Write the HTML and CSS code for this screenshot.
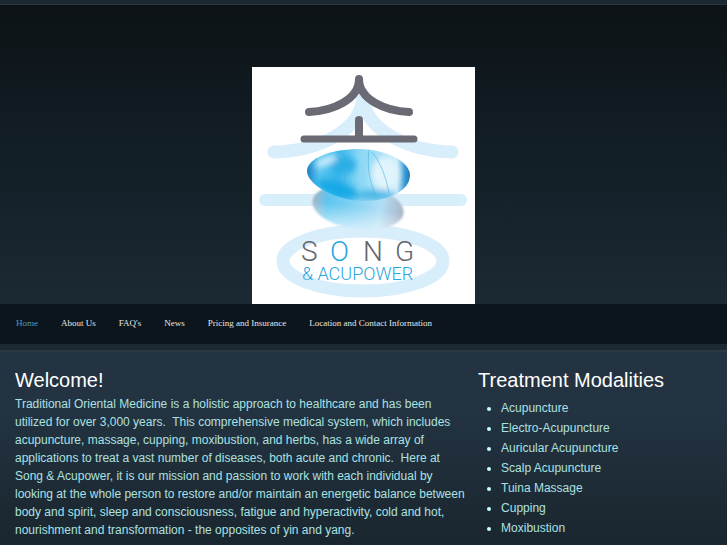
FILE: index.html
```html
<!DOCTYPE html>
<html lang="en">
<head>
    <meta charset="UTF-8">
    <meta name="viewport" content="width=device-width, initial-scale=1.0">
    <title>Song &amp; Acupower</title>
    <link rel="stylesheet" href="styles.css">
</head>
<body>
    <header>
        <a href="#" class="logo">
            <svg width="223" height="238" viewBox="0 0 223 238" role="img" aria-label="Song &amp; Acupower">
                <defs>
                    <linearGradient id="stone" x1="0" y1="0" x2="1" y2="0">
                        <stop offset="0" stop-color="#1b83c4"/>
                        <stop offset="0.12" stop-color="#5ac6f0"/>
                        <stop offset="0.3" stop-color="#35b5ea"/>
                        <stop offset="0.5" stop-color="#8ad7f5"/>
                        <stop offset="0.68" stop-color="#a4def5"/>
                        <stop offset="0.86" stop-color="#d0eefa"/>
                        <stop offset="0.94" stop-color="#3b9bd3"/>
                        <stop offset="1" stop-color="#1673b8"/>
                    </linearGradient>
                    <linearGradient id="shadow" x1="0" y1="0" x2="1" y2="0">
                        <stop offset="0" stop-color="#a9b5c4"/>
                        <stop offset="0.16" stop-color="#5ec6ef"/>
                        <stop offset="0.42" stop-color="#7fd0f3"/>
                        <stop offset="0.75" stop-color="#b2dff5"/>
                        <stop offset="1" stop-color="#a8b4c6"/>
                    </linearGradient>
                    <linearGradient id="fade" x1="0" y1="0" x2="0" y2="1">
                        <stop offset="0.5" stop-color="#fff" stop-opacity="0"/>
                        <stop offset="1" stop-color="#fff" stop-opacity="0.6"/>
                    </linearGradient>
                    <filter id="soft" x="-10%" y="-10%" width="120%" height="120%">
                        <feGaussianBlur stdDeviation="1"/>
                    </filter>
                    <filter id="glow" x="-40%" y="-40%" width="180%" height="180%">
                        <feGaussianBlur stdDeviation="3"/>
                    </filter>
                    <clipPath id="stone-edge">
                        <path d="M55 105C55 92 80 83 107 83C134 83 158 96 158 109C158 124 138 135 112 135C85 135 55 119 55 105Z"/>
                    </clipPath>
                </defs>
                <rect y="1" width="223" height="237" fill="#fff"/>
                <g fill="none" stroke="#d9eefb" stroke-linecap="round" stroke-linejoin="round">
                    <path d="M22 86C64 85 111 66 111 28C111 66 159 85 200 86" stroke-width="13"/>
                    <path d="M13 134H209" stroke-width="12"/>
                    <ellipse cx="111" cy="195" rx="80" ry="30" stroke-width="13"/>
                </g>
                <g filter="url(#soft)">
                    <ellipse cx="106" cy="141" rx="46" ry="22" transform="rotate(8 106 141)" fill="url(#shadow)"/>
                    <ellipse cx="106" cy="141" rx="46" ry="22" transform="rotate(8 106 141)" fill="url(#fade)"/>
                </g>
                <g clip-path="url(#stone-edge)">
                    <rect x="55" y="82" width="104" height="54" fill="url(#stone)"/>
                    <g filter="url(#glow)">
                        <ellipse cx="86" cy="123" rx="23" ry="7" transform="rotate(18 86 123)" fill="#18a9e6"/>
                        <ellipse cx="92" cy="99" rx="12" ry="9" fill="#2caee5"/>
                        <ellipse cx="133" cy="108" rx="14" ry="17" fill="#e1f4fc"/>
                        <ellipse cx="74" cy="95" rx="12" ry="4" transform="rotate(-25 74 95)" fill="#d5f1fc"/>
                        <ellipse cx="123" cy="129" rx="21" ry="5" fill="#49b7e7"/>
                    </g>
                    <path d="M117 84C115 100 117 114 124 130M120 86Q132 100 137 127M84 90Q96 96 92 119M63 116Q92 110 107 133" fill="none" stroke="#3faede" stroke-opacity="0.55"/>
                </g>
                <g fill="none" stroke="#696a73" stroke-width="8" stroke-linecap="round" stroke-linejoin="round">
                    <path d="M57 46C80 45 107 34 107 13C107 34 134 45 157 46"/>
                    <path d="M107 54V72"/>
                    <path d="M52 73H162" stroke-width="7"/>
                </g>
                <g class="logo-name">
                    <text x="49" y="195">S</text>
                    <text x="78" y="195" class="logo-blue">O</text>
                    <text x="111" y="195">N</text>
                    <text x="143" y="195">G</text>
                </g>
                <text x="50" y="214" class="logo-sub logo-blue">&amp; ACUPOWER</text>
            </svg>
        </a>
    </header>
    <nav>
        <a href="#" class="active">Home</a>
        <a href="#">About Us</a>
        <a href="#">FAQ's</a>
        <a href="#">News</a>
        <a href="#">Pricing and Insurance</a>
        <a href="#">Location and Contact Information</a>
    </nav>
    <main>
        <section class="welcome">
            <h2>Welcome!</h2>
            <p>Traditional Oriental Medicine is a holistic approach to healthcare and has been utilized for over 3,000 years.&nbsp; This comprehensive medical system, which includes acupuncture, massage, cupping, moxibustion, and herbs, has a wide array of applications to treat a vast number of diseases, both acute and chronic.&nbsp; Here at Song &amp; Acupower, it is our mission and passion to work with each individual by looking at the whole person to restore and/or maintain an energetic balance between body and spirit, sleep and consciousness, fatigue and hyperactivity, cold and hot, nourishment and transformation - the opposites of yin and yang.</p>
        </section>
        <section class="modalities">
            <h2>Treatment Modalities</h2>
            <ul>
                <li>Acupuncture</li>
                <li>Electro-Acupuncture</li>
                <li>Auricular Acupuncture</li>
                <li>Scalp Acupuncture</li>
                <li>Tuina Massage</li>
                <li>Cupping</li>
                <li>Moxibustion</li>
            </ul>
        </section>
    </main>
</body>
</html>
```
FILE: styles.css
```css
* {
    box-sizing: border-box;
}
body {
    margin: 0;
    font-family: "Liberation Sans", Arial, sans-serif;
    font-size: 12px;
    line-height: 18px;
    color: #ace1e1;
    background-color: #1c2933;
}
header {
    margin-top: 4px;
    border-top: 1px solid #2b3740;
    padding-top: 61px;
    display: flex;
    justify-content: center;
    background: linear-gradient(#0d1316, #111c23 40%, #1c2a34);
}
.logo,
.logo svg {
    display: block;
}
.logo-name {
    font-family: Roboto, sans-serif;
    font-size: 28px;
    font-weight: 300;
    fill: #65666d;
}
.logo-sub {
    font-family: Roboto, sans-serif;
    font-size: 18px;
    font-weight: 300;
}
.logo-blue {
    fill: #2aa7df;
}
nav {
    display: flex;
    flex-wrap: wrap;
    gap: 0 23px;
    padding: 10px 16px 12px;
    background-color: #0c151b;
}
nav a {
    font-family: "Liberation Serif", "Times New Roman", serif;
    font-size: 9px;
    color: #e6e6e6;
    text-decoration: none;
}
nav a:hover,
nav a.active {
    color: #549bbd;
}
main {
    display: grid;
    grid-template-columns: 65% 1fr;
    gap: 10px;
    margin-top: 6px;
    border-top: 2px solid #2a3a47;
    padding: 16px 15px 5px;
    background: linear-gradient(#233341, #233341 30%, #1a262f);
}
h2 {
    margin: 0 0 3px;
    font-size: 20px;
    line-height: 24px;
    font-weight: normal;
    color: #fff;
}
p {
    margin: 0;
}
ul {
    margin: 0;
    padding: 4px 0 0 23px;
}
li {
    margin-bottom: 2px;
}
li::marker {
    color: #c5ffff;
}
```
